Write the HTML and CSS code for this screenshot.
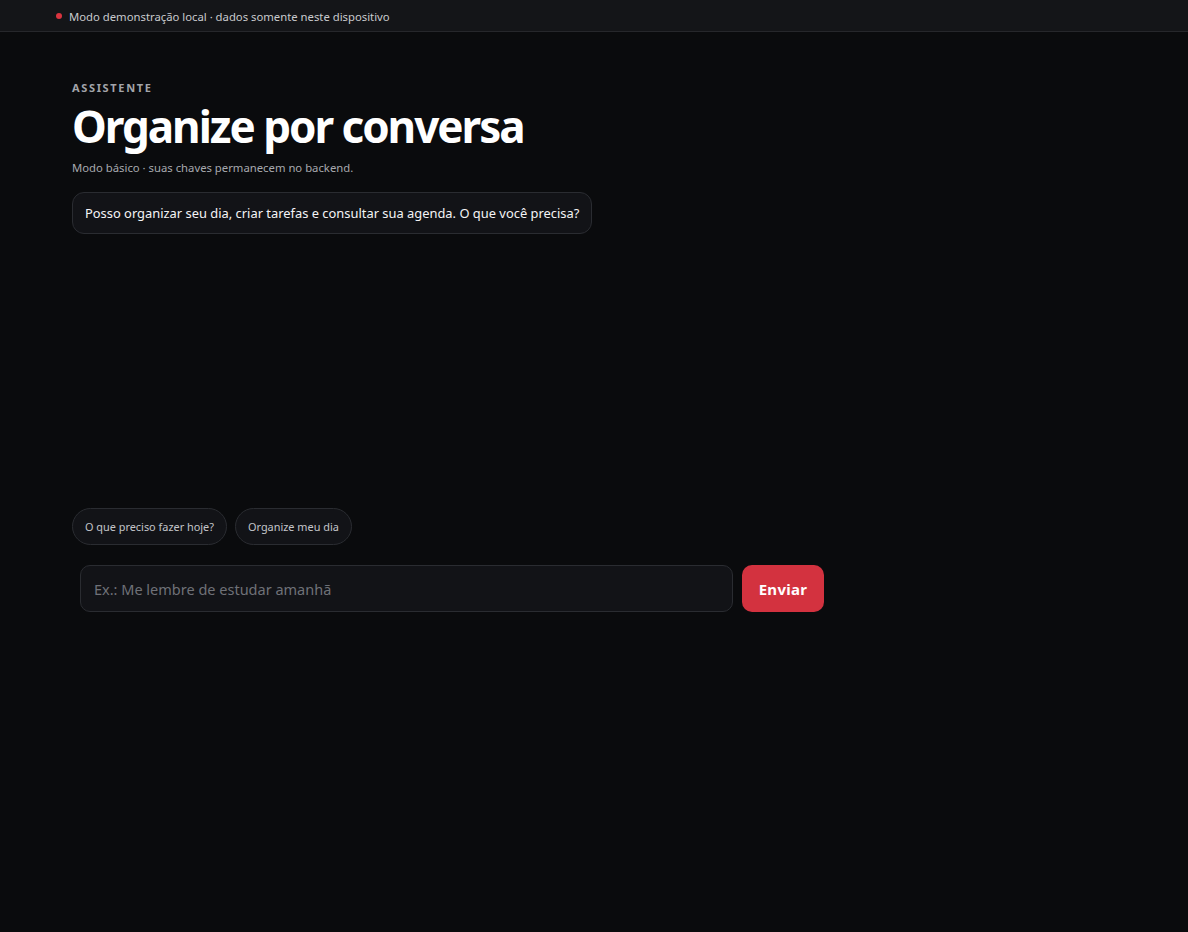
FILE: index.html
```html
<!DOCTYPE html>
<html lang="pt-BR">
<head>
<meta charset="utf-8">
<title>Assistente</title>
<link rel="stylesheet" href="styles.css">
</head>
<body>
<div class="demo-bar">
  <span class="dot"></span>
  <span class="demo-text">Modo demonstração local · dados somente neste dispositivo</span>
</div>
<main class="page">
  <section class="chat">
    <div class="eyebrow">ASSISTENTE</div>
    <h1 class="title">Organize por conversa</h1>
    <p class="subtitle">Modo básico · suas chaves permanecem no backend.</p>
    <div class="messages">
      <div class="bubble">Posso organizar seu dia, criar tarefas e consultar sua agenda. O que você precisa?</div>
    </div>
    <div class="chips">
      <button class="chip">O que preciso fazer hoje?</button>
      <button class="chip">Organize meu dia</button>
    </div>
    <form class="composer">
      <input class="input" type="text" placeholder="Ex.: Me lembre de estudar amanhã">
      <button class="send" type="button">Enviar</button>
    </form>
  </section>
</main>
</body>
</html>
```
FILE: styles.css
```css
* { box-sizing: border-box; }
html, body { margin: 0; padding: 0; }
body {
  background: #0a0b0d;
  color: #f2f2f4;
  font-family: "Noto Sans", "Open Sans", sans-serif;
  min-height: 932px;
}
.demo-bar {
  height: 32px;
  background: #141518;
  border-bottom: 1px solid #26272b;
  display: flex;
  align-items: center;
  gap: 7px;
  padding-left: 56px;
}
.dot {
  width: 6px;
  height: 6px;
  border-radius: 50%;
  background: #d9343f;
}
.demo-text {
  font-size: 11.3px;
  color: #c9cacd;
  padding-top: 1px;
}
.page {
  padding: 50px 72px 0;
}
.chat {
  width: 760px;
  display: flex;
  flex-direction: column;
}
.eyebrow {
  font-size: 11px;
  font-weight: 700;
  letter-spacing: 0.15em;
  color: #a3a5aa;
  line-height: 14px;
  margin-top: -1px;
}
.title {
  margin: 5px 0 0;
  font-size: 44px;
  font-weight: 700;
  letter-spacing: -0.046em;
  line-height: 52px;
  color: #ffffff;
}
.subtitle {
  margin: 9px 0 0;
  font-size: 11.3px;
  color: #a7a9ae;
  line-height: 14px;
}
.messages {
  margin-top: 17px;
  height: 304px;
  display: flex;
  flex-direction: column;
  align-items: flex-start;
}
.bubble {
  background: #121317;
  border: 1px solid #2a2c31;
  border-radius: 12px;
  padding: 11px 12px;
  font-size: 12.9px;
  line-height: 18px;
  color: #f4f4f6;
}
.chips {
  margin-top: 12px;
  display: flex;
  gap: 8px;
}
.chip {
  height: 37px;
  padding: 0 12px;
  border-radius: 999px;
  background: #121317;
  border: 1px solid #2a2c31;
  color: #c3c5c9;
  font-family: inherit;
  font-size: 10.9px;
}
.composer {
  margin-top: 12px;
  padding: 8px;
  display: flex;
  gap: 9px;
}
.input {
  flex: 1;
  height: 47px;
  background: #121317;
  border: 1px solid #2a2c31;
  border-radius: 10px;
  padding: 0 13px;
  font-family: inherit;
  font-size: 14.5px;
  color: #f2f2f4;
  outline: none;
}
.input::placeholder { color: #6f7177; }
.send {
  width: 82px;
  height: 47px;
  border: none;
  border-radius: 10px;
  background: #d3323f;
  color: #ffffff;
  font-family: inherit;
  font-size: 15px;
  font-weight: 700;
  letter-spacing: 0.02em;
}
```
